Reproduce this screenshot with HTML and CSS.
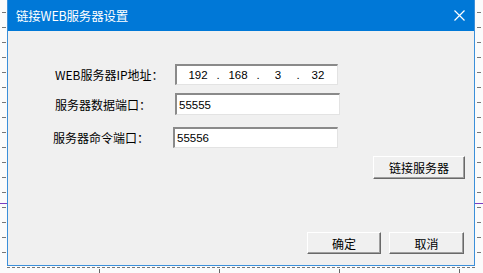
FILE: index.html
```html
<!DOCTYPE html>
<html lang="zh">
<head>
<meta charset="utf-8">
<link rel="stylesheet" href="styles.css">
</head>
<body>
<div class="page">
  <div class="ruler ruler-left"></div>
  <div class="dialog">
    <div class="titlebar">
      <span class="title">链接WEB服务器设置</span>
      <svg class="close" width="11" height="11" viewBox="0 0 11 11"><path d="M0.5 0.5 L10.5 10.5 M10.5 0.5 L0.5 10.5" stroke="#fff" stroke-width="1.2" fill="none"/></svg>
    </div>
    <div class="body">
      <div class="row row1">
        <span class="label">WEB服务器IP地址：</span>
        <div class="field ip">
          <span class="seg">192</span><span class="dot">.</span>
          <span class="seg">168</span><span class="dot">.</span>
          <span class="seg">3</span><span class="dot">.</span>
          <span class="seg">32</span>
        </div>
      </div>
      <div class="row row2">
        <span class="label">服务器数据端口：</span>
        <div class="field wide">55555</div>
      </div>
      <div class="row row3">
        <span class="label">服务器命令端口：</span>
        <div class="field wide">55556</div>
      </div>
      <div class="connect-row">
        <button class="btn connect">链接服务器</button>
      </div>
      <div class="footer">
        <button class="btn ok">确定</button>
        <button class="btn cancel">取消</button>
      </div>
    </div>
  </div>
  <div class="ruler ruler-right"></div>
</div>
<div class="ruler-bottom"></div>
</body>
</html>
```

FILE: styles.css
```css
html, body {
  margin: 0;
  padding: 0;
  background: #fbfbfb;
  font-family: "Noto Sans CJK SC", "DejaVu Sans", sans-serif;
  font-size: 12px;
  color: #000;
  overflow: hidden;
}

.page {
  display: flex;
  height: 266px;
}

.ruler {
  width: 7px;
  flex: none;
  background:
    linear-gradient(to bottom, transparent 203px, #7a3fc0 203px, #7a3fc0 204px, transparent 204px),
    repeating-linear-gradient(to bottom, transparent 0, transparent 12px, #777 12px, #777 13px, transparent 13px, transparent 15px);
  background-repeat: no-repeat, repeat-y;
  background-size: 100% 100%, 4px 100%;
}
.ruler-left { background-position: 0 0, 2px 0; }
.ruler-right { width: 8px; background-position: 0 0, 2px 0; }

.dialog {
  width: 467px;
  border: 1px solid #3b8fd9;
  border-top: none;
  display: flex;
  flex-direction: column;
  background: #f0f0f0;
}

.titlebar {
  height: 31px;
  background: #0078d7;
  display: flex;
  align-items: center;
  justify-content: space-between;
  padding: 0 9px 0 8px;
  flex: none;
}
.title {
  color: #fff;
  font-size: 12.5px;
  letter-spacing: -0.2px;
}

.body {
  flex: 1;
  display: flex;
  flex-direction: column;
  padding: 0 9px 11px 0;
}

.row {
  display: flex;
  align-items: center;
}
.label {
  width: 120px;
  flex: none;
}
.row1 { margin-top: 33px; padding-left: 47px; height: 21px; }
.row2 { margin-top: 8px; padding-left: 47px; height: 22px; }
.row3 { margin-top: 12px; padding-left: 45px; height: 21px; }

.field {
  box-sizing: border-box;
  height: 100%;
  background: #fff;
  border-style: solid;
  border-width: 2px 1px 1px 2px;
  border-color: #8a8a8a #e3e3e3 #e3e3e3 #8a8a8a;
  display: flex;
  align-items: center;
  padding-left: 2px;
  font-family: "Liberation Sans", sans-serif;
  font-size: 11.5px;
}
.wide { width: 165px; }
.ip { width: 163px; padding-left: 6px; }
.seg { width: 30px; text-align: center; }
.dot { width: 10px; text-align: center; }

.connect-row {
  display: flex;
  justify-content: flex-end;
  margin-top: 8px;
}

.btn {
  box-sizing: border-box;
  font-family: "Noto Sans CJK SC", sans-serif;
  font-size: 12px;
  background: #f0f0f0;
  border: 1px solid;
  border-color: #fff #696969 #696969 #fff;
  box-shadow: inset -1px -1px 0 #a0a0a0;
  padding: 0;
  color: #000;
}
.connect { width: 92px; height: 23px; }

.footer {
  margin-top: auto;
  display: flex;
  justify-content: flex-end;
  gap: 8px;
  padding-right: 1px;
}
.ok { width: 74px; height: 22px; }
.cancel { width: 75px; height: 22px; }

.ruler-bottom {
  height: 7px;
  margin-left: 7px;
  width: 469px;
  background:
    repeating-linear-gradient(to right, #777 0, #777 3px, transparent 3px, transparent 5px) 0 1px / 100% 1px no-repeat,
    repeating-linear-gradient(to right, transparent 0, transparent 92px, #666 92px, #666 93px, transparent 93px, transparent 120px) 0 3px / 100% 4px no-repeat;
}
```
